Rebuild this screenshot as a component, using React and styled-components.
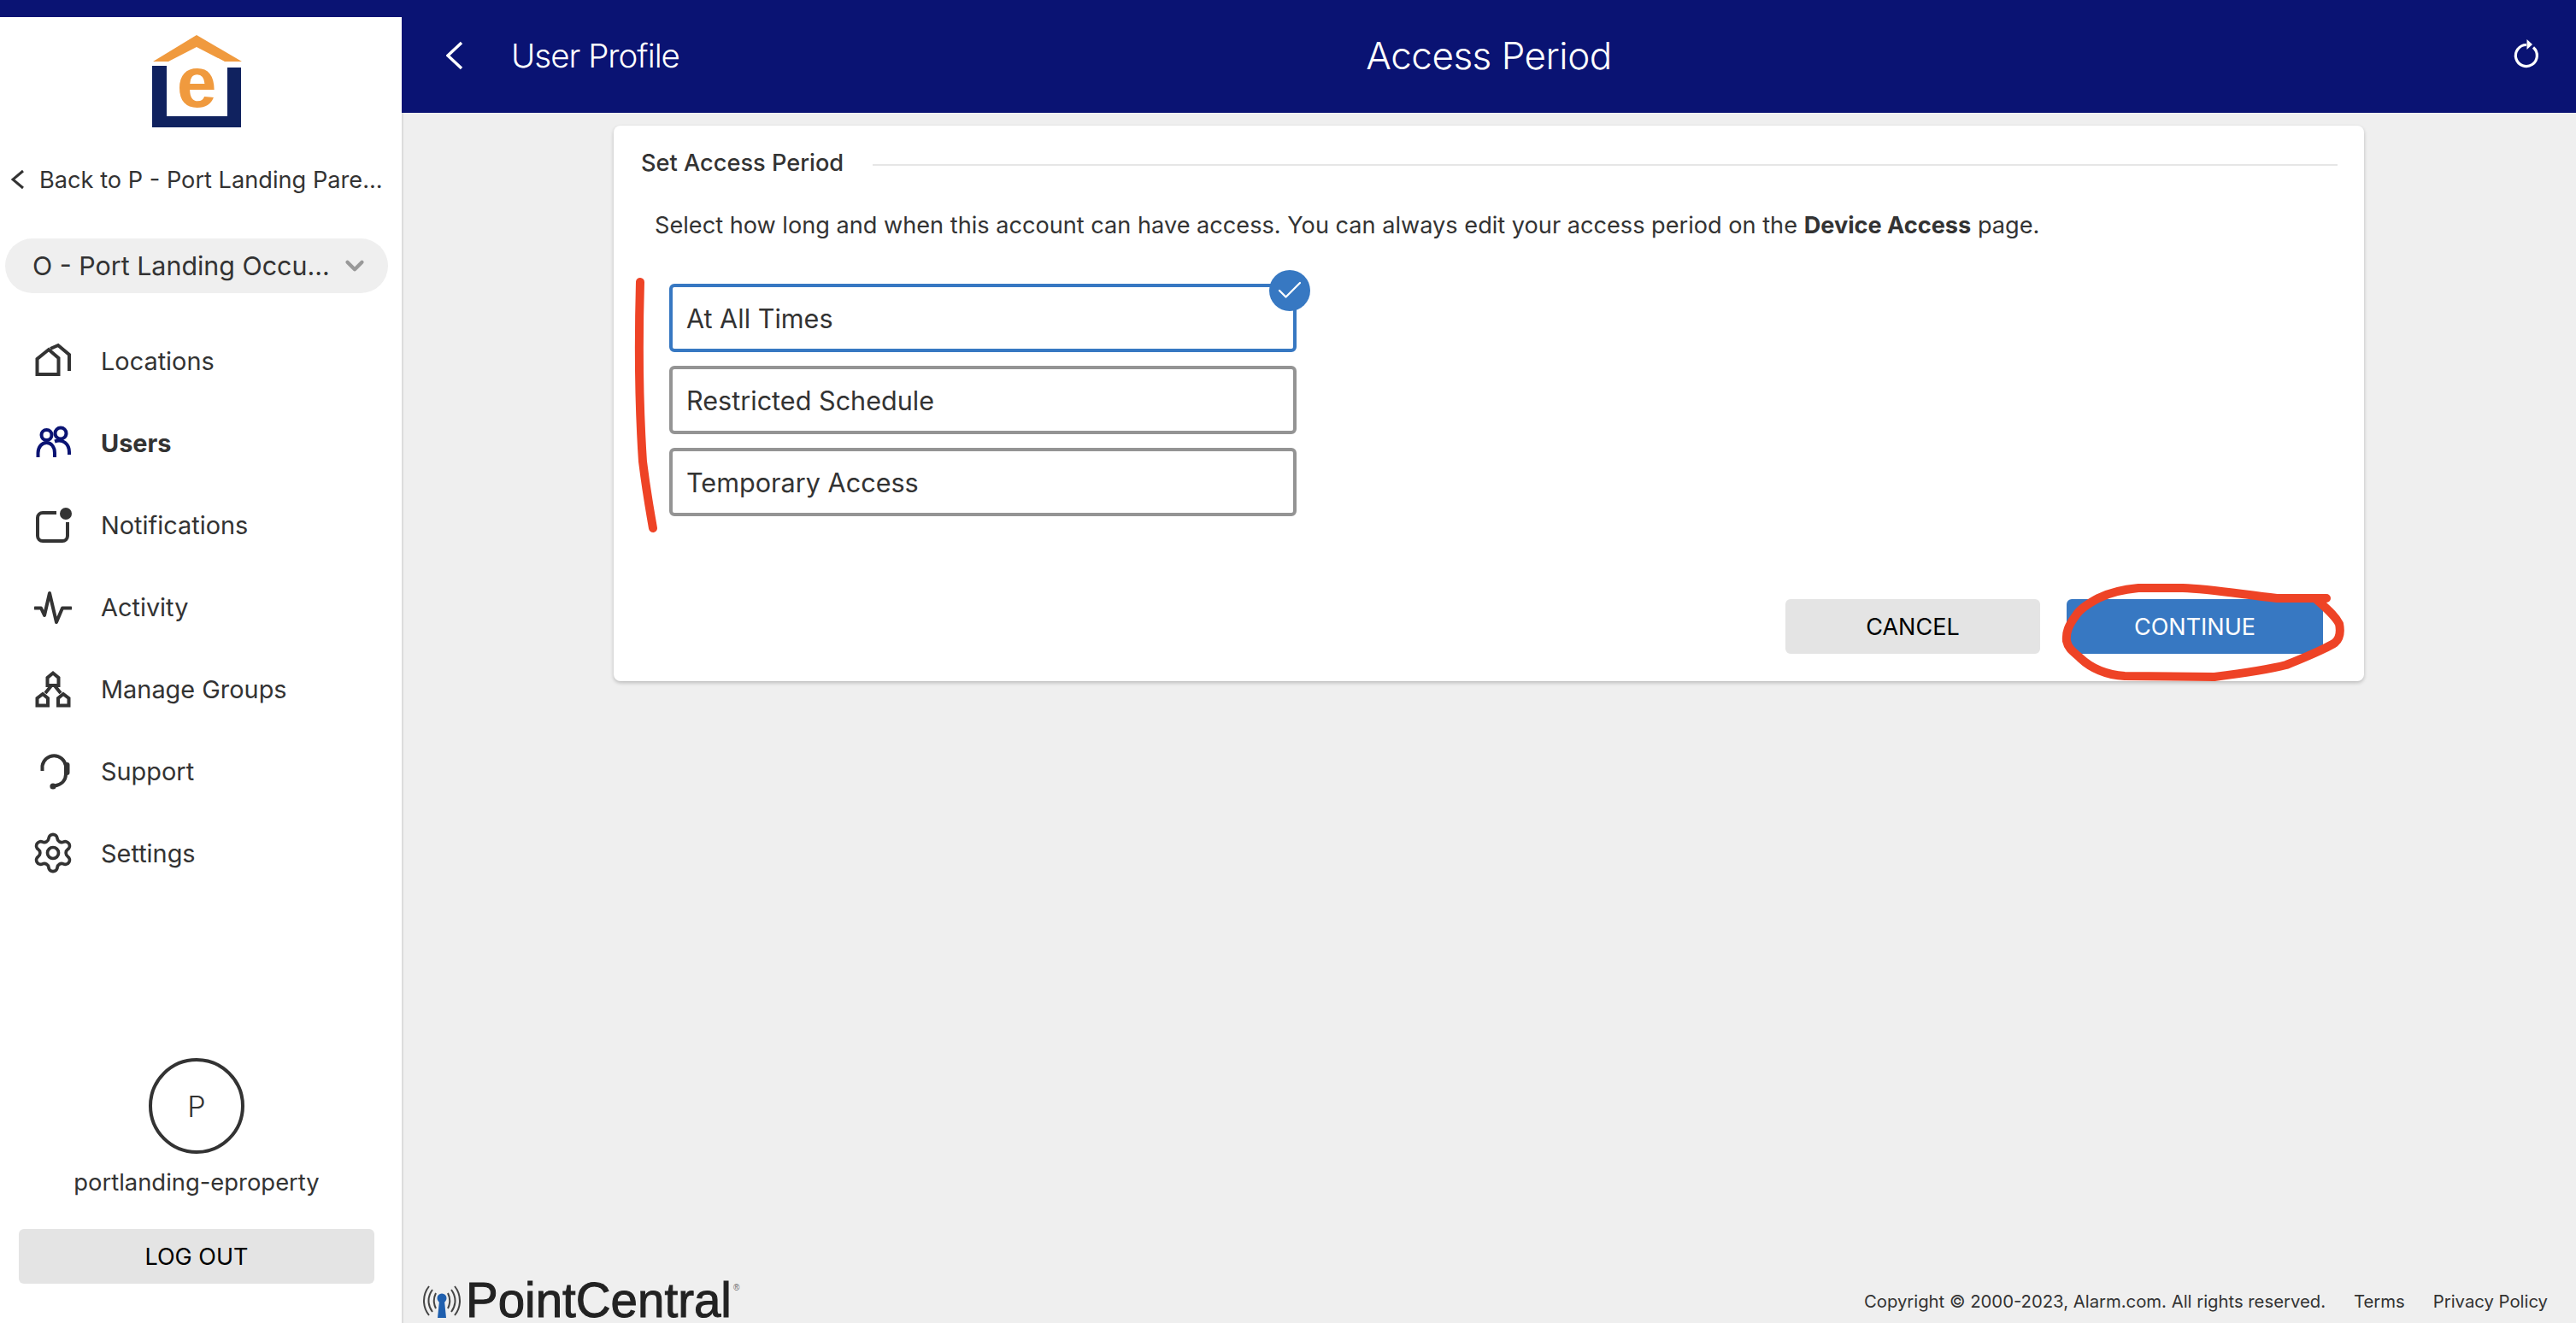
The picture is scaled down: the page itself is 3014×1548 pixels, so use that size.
import React from "react";
import styled, { createGlobalStyle } from "styled-components";
import { Settings, ChevronDown, Check } from "lucide-react";

const NAVY = "#0a1373";
const BLUE = "#3778c2";
const INK = "#333333";
const RED = "#ee4326";

const Global = createGlobalStyle`
  html, body { margin: 0; padding: 0; background: #efefef; }
  body { font-family: Inter, "Liberation Sans", sans-serif; color: ${INK}; }
  * { box-sizing: border-box; }
`;

const Shell = styled.div`
  position: relative;
  display: flex;
  width: 3014px;
  height: 1548px;
  overflow: hidden;
  background: #efefef;
`;

const Sidebar = styled.aside`
  flex: 0 0 470px;
  display: flex;
  flex-direction: column;
  background: #fff;
  border-top: 20px solid ${NAVY};
  padding-bottom: 46px;
`;

const LogoWrap = styled.div`
  display: flex;
  justify-content: center;
  padding: 20px 10px 0 0;
  height: 132px;
`;

const BackLink = styled.div`
  display: flex;
  align-items: center;
  height: 40px;
  margin-top: 38px;
  padding-left: 13px;
  gap: 17px;
  font-size: 27.2px;
  white-space: nowrap;
`;

const Pill = styled.div`
  display: flex;
  align-items: center;
  justify-content: space-between;
  height: 64px;
  margin: 49px 16px 0 6px;
  padding: 0 22px 0 32px;
  border-radius: 32px;
  background: #efefef;
  font-size: 30.4px;
  white-space: nowrap;
`;

const Nav = styled.nav`
  display: flex;
  flex-direction: column;
  margin-top: 31px;
`;

const NavItem = styled.div`
  display: flex;
  align-items: center;
  height: 96px;
  padding-left: 40px;
  gap: 34px;
  font-size: 28.9px;
  font-weight: ${(p) => (p.$active ? 700 : 400)};
`;

const IconCell = styled.span`
  flex: 0 0 44px;
  width: 44px;
  height: 44px;
  display: flex;
  align-items: center;
  justify-content: center;
  color: ${(p) => (p.$active ? NAVY : INK)};
  & > svg { flex-shrink: 0; }
`;

const UserBlock = styled.div`
  margin-top: auto;
  padding-right: 10px;
  display: flex;
  flex-direction: column;
  align-items: center;
`;

const Avatar = styled.div`
  width: 112px;
  height: 112px;
  border-radius: 50%;
  border: 4px solid ${INK};
  display: flex;
  align-items: center;
  justify-content: center;
  font-size: 34px;
  font-weight: 300;
`;

const UserName = styled.div`
  margin-top: 15px;
  font-size: 27.4px;
  line-height: 36px;
`;

const Button = styled.button`
  border: 0;
  border-radius: 6px;
  height: 64px;
  font-family: Inter, "Liberation Sans", sans-serif;
  font-size: 27px;
  font-weight: 400;
  background: ${(p) => (p.$primary ? BLUE : "#e4e4e4")};
  color: ${(p) => (p.$primary ? "#fff" : "#000")};
  width: ${(p) => p.$w}px;
`;

const LogoutWrap = styled.div`
  margin-top: 37px;
  padding-left: 22px;
  width: 100%;
`;

const Main = styled.main`
  flex: 1;
  display: flex;
  flex-direction: column;
  min-width: 0;
`;

const Header = styled.header`
  flex: 0 0 132px;
  display: grid;
  grid-template-columns: 1fr auto 1fr;
  align-items: center;
  background: ${NAVY};
  color: #fff;
  padding: 0 52px 2px 52px;
`;

const HeaderLeft = styled.div`
  display: flex;
  align-items: center;
  gap: 56px;
  font-size: 38.5px;
  letter-spacing: -1px;
  font-weight: 300;
`;

const HeaderTitle = styled.h1`
  margin: 0;
  font-size: 44px;
  letter-spacing: -0.5px;
  font-weight: 300;
`;

const HeaderRight = styled.div`
  display: flex;
  justify-content: flex-end;
  margin-right: -14px;
`;

const Content = styled.div`
  flex: 1;
  display: flex;
  flex-direction: column;
  border-left: 2px solid #dcdcdc;
`;

const Card = styled.section`
  width: 2048px;
  margin: 15px 0 0 246px;
  height: 650px;
  background: #fff;
  border-radius: 8px;
  box-shadow: 0 2px 4px rgba(0, 0, 0, 0.22);
  display: flex;
  flex-direction: column;
  padding: 24px 31px 32px 32px;
`;

const SectionHead = styled.div`
  display: flex;
  align-items: center;
  gap: 34px;
  height: 38px;
  font-size: 27.2px;
  font-weight: 500;
  white-space: nowrap;
  &::after {
    content: "";
    flex: 1;
    height: 2px;
    margin-top: 6px;
    background: #e6e6e6;
  }
`;

const Description = styled.p`
  margin: 37px 0 0 16px;
  font-size: 27.15px;
  line-height: 36px;
  & b { font-weight: 700; }
`;

const Options = styled.div`
  display: flex;
  flex-direction: column;
  gap: 16px;
  width: 734px;
  margin: 50px 0 0 33px;
`;

const Option = styled.div`
  position: relative;
  height: 80px;
  display: flex;
  align-items: center;
  padding-left: 16px;
  border: 4px solid ${(p) => (p.$selected ? BLUE : "#949494")};
  border-radius: 6px;
  font-size: 30.6px;
  background: #fff;
`;

const CheckBadge = styled.span`
  position: absolute;
  top: -20px;
  right: -20px;
  width: 48px;
  height: 48px;
  border-radius: 50%;
  background: ${BLUE};
  color: #fff;
  display: flex;
  align-items: center;
  justify-content: center;
`;

const Actions = styled.div`
  margin-top: auto;
  display: flex;
  justify-content: flex-end;
  gap: 31px;
  padding-right: 17px;
`;

const Footer = styled.footer`
  margin-top: auto;
  display: flex;
  align-items: flex-end;
  justify-content: space-between;
  padding: 0 33px 3px 22px;
`;

const Brand = styled.div`
  display: flex;
  align-items: center;
  gap: 5px;
  height: 46px;
`;

const BrandName = styled.span`
  font-family: "Liberation Sans", Arial, sans-serif;
  font-size: 56.5px;
  line-height: 46px;
  color: #222;
  -webkit-text-stroke: 1px #222;
`;

const BrandMark = styled.sup`
  align-self: flex-start;
  font-family: "Liberation Sans", Arial, sans-serif;
  font-size: 10px;
  line-height: 12px;
  margin: 2px 0 0 -3px;
  color: #666;
`;

const Legal = styled.div`
  display: flex;
  gap: 33px;
  font-size: 20.3px;
  line-height: 30px;
  margin-bottom: 7px;
`;

const Annotation = styled.svg`
  position: absolute;
  inset: 0;
  pointer-events: none;
`;

const LogoMark = () => (
  <svg width="108" height="112" viewBox="176 40 108 112">
    <polygon points="230,41 283,72 263,72 230,55 197,72 179,72" fill="#f09a3e" />
    <path d="M178 77 H195 V136 H266 V79 H282 V149 H178 Z" fill="#10225f" />
    <text x="230" y="125" textAnchor="middle" fontFamily="'Liberation Sans', sans-serif" fontWeight="700" fontSize="84" fill="#f09a3e">e</text>
  </svg>
);

const Chev = ({ w = 16, h = 24, color = "currentColor", sw = 3 }) => (
  <svg width={w} height={h} viewBox={`0 0 ${w} ${h}`}>
    <polyline points={`${w - 2},2 2,${h / 2} ${w - 2},${h - 2}`} fill="none" stroke={color} strokeWidth={sw} />
  </svg>
);

const S = { fill: "none", stroke: "currentColor", strokeWidth: 4 };
const Locations = () => (
  <svg width="44" height="44" viewBox="0 0 44 44" {...S}>
    <path d="M3.5 38 V20 L17 9 L28.5 19 V38 Z" />
    <path d="M19 8 L28 4 L41 15 V34" />
  </svg>
);
const Users = () => (
  <svg width="44" height="44" viewBox="0 0 44 44" {...S}>
    <circle cx="14.5" cy="13" r="6" />
    <circle cx="31" cy="11" r="6.5" />
    <path d="M4.5 39 V34 C4.5 27 9 22 14.5 22 C20 22 24 27 24 34 V39" />
    <path d="M24 20.5 C34 17 41 24 41 33 V36" />
  </svg>
);
const Notifications = () => (
  <svg width="44" height="44" viewBox="0 0 44 44" {...S}>
    <path d="M26 8 H10 a6 6 0 0 0 -6 6 V35 a6 6 0 0 0 6 6 H33 a6 6 0 0 0 6 -6 V19" />
    <circle cx="37" cy="9" r="7" fill="currentColor" stroke="none" />
  </svg>
);
const Activity = () => (
  <svg width="44" height="44" viewBox="0 0 44 44" {...S} strokeLinejoin="round" strokeLinecap="round">
    <polyline points="1,23.5 8,23.5 12,32 18,6 26,40 33,23.5 43,23.5" />
  </svg>
);
const Groups = () => (
  <svg width="44" height="44" viewBox="0 0 44 44" {...S}>
    <path d="M15.5 18 V9 L22 3.5 L28.5 9 V18 Z" />
    <path d="M3.5 41.5 V33 L10 28 L16 33 V41.5 Z" />
    <path d="M28 41.5 V33 L34 28 L40.5 33 V41.5 Z" />
    <path d="M19.5 19 L13 27 M24.5 19 L31 27" />
  </svg>
);
const Support = () => (
  <svg width="44" height="44" viewBox="0 0 44 44" {...S}>
    <path d="M9.5 22 V16 A14 14.5 0 0 1 37 16 V26 C37 33 32 38 24 39.5" />
    <rect x="35" y="12" width="6.5" height="15" rx="3" fill="currentColor" stroke="none" />
    <circle cx="22" cy="40" r="3.6" fill="currentColor" stroke="none" />
  </svg>
);

const Refresh = () => (
  <svg width="40" height="44" viewBox="0 0 40 44">
    <path d="M28 12.5 A12.5 12.5 0 1 1 20 9.5" fill="none" stroke="#fff" strokeWidth="3.2" />
    <path d="M20.5 3 L27 9 L20.5 15 Z" fill="#fff" />
  </svg>
);

const BrandIcon = () => (
  <svg width="46" height="40" viewBox="0 0 46 40" fill="none">
    <g stroke="#444" strokeWidth="2">
      <path d="M8 3 C0 13 0 27 8 37" />
      <path d="M12 7 C6 15 6 25 12 33" />
      <path d="M16 11 C13 17 13 23 16 29" />
      <path d="M38 3 C46 13 46 27 38 37" />
      <path d="M34 7 C40 15 40 25 34 33" />
      <path d="M30 11 C33 17 33 23 30 29" />
    </g>
    <circle cx="23" cy="17" r="5.5" fill="#1f5fae" />
    <path d="M20 20 H26 L28 40 H18 Z" fill="#1f5fae" />
  </svg>
);

const navItems = [
  ["Locations", Locations],
  ["Users", Users, true],
  ["Notifications", Notifications],
  ["Activity", Activity],
  ["Manage Groups", Groups],
  ["Support", Support],
  ["Settings", () => <Settings size={52} strokeWidth={1.7} />],
];

const periods = ["At All Times", "Restricted Schedule", "Temporary Access"];

export default function App() {
  return (
    <>
      <Global />
      <Shell>
        <Sidebar>
          <LogoWrap>
            <LogoMark />
          </LogoWrap>
          <BackLink>
            <Chev />
            <span>Back to P - Port Landing Pare...</span>
          </BackLink>
          <Pill>
            <span>O - Port Landing Occu...</span>
            <ChevronDown size={34} strokeWidth={3} color="#999" />
          </Pill>
          <Nav>
            {navItems.map(([label, Icon, active]) => (
              <NavItem key={label} $active={active}>
                <IconCell $active={active}>
                  <Icon />
                </IconCell>
                {label}
              </NavItem>
            ))}
          </Nav>
          <UserBlock>
            <Avatar>P</Avatar>
            <UserName>portlanding-eproperty</UserName>
            <LogoutWrap>
              <Button $w={416}>LOG OUT</Button>
            </LogoutWrap>
          </UserBlock>
        </Sidebar>
        <Main>
          <Header>
            <HeaderLeft>
              <Chev w={20} h={34} color="#fff" sw={3.5} />
              <span>User Profile</span>
            </HeaderLeft>
            <HeaderTitle>Access Period</HeaderTitle>
            <HeaderRight>
              <Refresh />
            </HeaderRight>
          </Header>
          <Content>
            <Card>
              <SectionHead>Set Access Period</SectionHead>
              <Description>
                Select how long and when this account can have access. You can always edit your access period on the <b>Device Access</b> page.
              </Description>
              <Options>
                {periods.map((label, i) => (
                  <Option key={label} $selected={i === 0}>
                    {label}
                    {i === 0 && (
                      <CheckBadge>
                        <Check size={36} strokeWidth={1.5} />
                      </CheckBadge>
                    )}
                  </Option>
                ))}
              </Options>
              <Actions>
                <Button $w={298}>CANCEL</Button>
                <Button $w={300} $primary>CONTINUE</Button>
              </Actions>
            </Card>
            <Footer>
              <Brand>
                <BrandIcon />
                <BrandName>PointCentral</BrandName>
                <BrandMark>®</BrandMark>
              </Brand>
              <Legal>
                <span>Copyright © 2000-2023, Alarm.com. All rights reserved.</span>
                <span>Terms</span>
                <span>Privacy Policy</span>
              </Legal>
            </Footer>
          </Content>
        </Main>
        <Annotation width="3014" height="1548" viewBox="0 0 3014 1548" fill="none" stroke={RED} strokeWidth="10" strokeLinecap="round" strokeLinejoin="round">
          <path d="M749 330 C747 400 748 480 752 540 C757 580 761 600 764 618" />
          <path d="M2722 700 L2664 700 C2620 695 2585 689 2554 688 L2502 688 C2480 690 2465 695 2455 700 C2440 708 2432 715 2429 720 C2420 732 2417 740 2418 750 C2420 760 2428 764 2434 770 C2450 785 2470 790 2486 791 L2591 792 C2630 787 2655 783 2675 778 C2700 768 2720 760 2732 752 C2740 745 2738 735 2737 730 C2732 720 2722 712 2711 702" />
        </Annotation>
      </Shell>
    </>
  );
}
